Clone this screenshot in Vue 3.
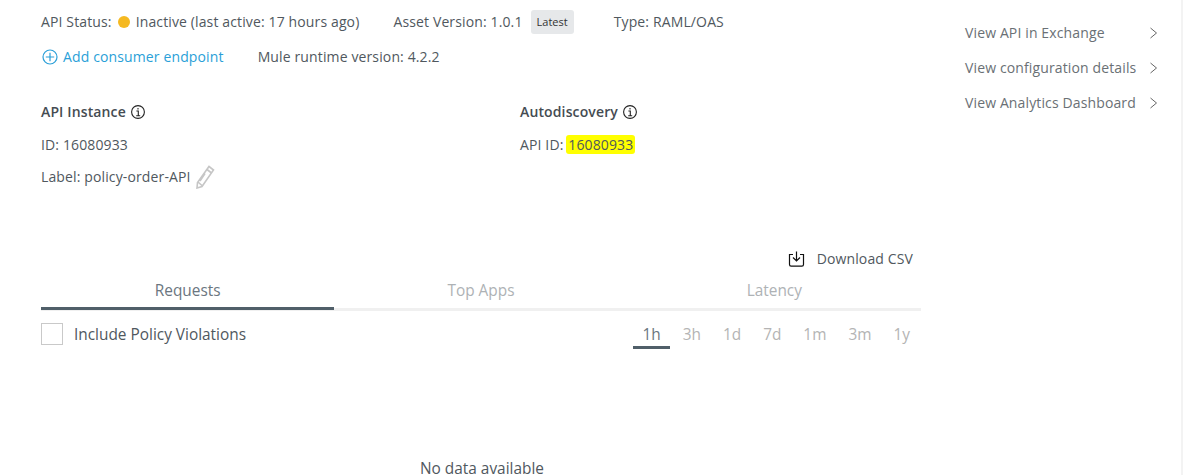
<template>
  <div class="page">
    <div class="main">
      <div class="row first">
        <span class="status">API Status:<i class="dot"></i>Inactive (last active: 17 hours ago)</span>
        <span class="asset">Asset Version: 1.0.1<b class="tag">Latest</b></span>
        <span class="type">Type: RAML/OAS</span>
      </div>
      <div class="row second">
        <a class="add">
          <svg width="16" height="16" viewBox="0 0 16 16" fill="none" stroke="#2a9fd8" stroke-width="1.2">
            <circle cx="8" cy="8" r="7" />
            <path d="M8 3.800v8.400M3.800 8h8.400" />
          </svg>
          Add consumer endpoint
        </a>
        <span>Mule runtime version: 4.2.2</span>
      </div>

      <div class="details">
        <div class="col">
          <h4>API Instance
            <svg class="info" width="14" height="14" viewBox="0 0 14 14" fill="none" stroke="#222" stroke-width="1.1">
              <circle cx="7" cy="7" r="6.400" />
              <path d="M5.400 6H7.300V10.800M5.200 10.800H9.200M7 3v1.400" />
            </svg>
          </h4>
          <p class="line">ID: 16080933</p>
          <p class="line label">Label: policy-order-API
            <svg width="20" height="24" viewBox="0 0 20 24" fill="none" stroke="#c6c6c6" stroke-width="1.6">
              <path d="M14 1.500l4.500 3.500L7 21.500l-5 1.500 .5-5.500zM12 4.500l4.500 3.500M3 17l4.500 4M10 8.500l-5 7.500" />
            </svg>
          </p>
        </div>
        <div class="col">
          <h4>Autodiscovery
            <svg class="info" width="14" height="14" viewBox="0 0 14 14" fill="none" stroke="#222" stroke-width="1.1">
              <circle cx="7" cy="7" r="6.400" />
              <path d="M5.400 6H7.300V10.800M5.200 10.800H9.200M7 3v1.400" />
            </svg>
          </h4>
          <p class="line">API ID: <mark>16080933</mark></p>
        </div>
      </div>

      <div class="download">
        <svg width="17" height="16" viewBox="0 0 17 16" fill="none" stroke="#111" stroke-width="1.2">
          <path d="M8.500 .5v9.500M5 6.500l3.500 3.500 3.500-3.500M5 3.500H1.500v10c0 1 .6 1.700 1.600 1.700h10.800c1 0 1.600-.7 1.600-1.700v-10H12" />
        </svg>
        Download CSV
      </div>

      <div class="tabs">
        <div v-for="(tab, index) in tabs" :key="tab" class="tab" :class="{ active: index === 0 }">{{ tab }}</div>
      </div>

      <div class="filters">
        <label class="check"><span class="box"></span>Include Policy Violations</label>
        <div class="ranges">
          <span v-for="(range, index) in ranges" :key="range" class="range" :class="{ active: index === 0 }">{{ range }}</span>
        </div>
      </div>

      <div class="empty">No data available</div>
    </div>

    <div class="side">
      <a v-for="link in links" :key="link" class="link">
        {{ link }}
        <svg width="9" height="12" viewBox="0 0 9 12" fill="none" stroke="#666" stroke-width="1">
          <path d="M1.500 1l6 5-6 5" />
        </svg>
      </a>
    </div>
    <div class="scrollbar"></div>
  </div>
</template>

<script setup>
const tabs = ['Requests', 'Top Apps', 'Latency']
const ranges = ['1h', '3h', '1d', '7d', '1m', '3m', '1y']
const links = ['View API in Exchange', 'View configuration details', 'View Analytics Dashboard']
</script>

<style>
html, body {
  margin: 0;
  overflow: hidden;
  background: #fff;
}
</style>

<style scoped>
.page {
  display: flex;
  height: 475px;
  overflow: hidden;
  font-family: "Open Sans", sans-serif;
  font-size: 14px;
  letter-spacing: 0.13px;
  line-height: 20px;
  color: #50585e;
}

.main {
  width: 880px;
  margin-left: 41px;
  flex-shrink: 0;
}

.row {
  display: flex;
  align-items: center;
}

.first {
  height: 24px;
  margin-top: 10px;
}

.status, .asset {
  display: flex;
  align-items: center;
}

.dot {
  width: 12px;
  height: 12px;
  margin: 0 6px 0 6px;
  border-radius: 50%;
  background: #f5b921;
}

.asset {
  margin-left: 34px;
}

.tag {
  margin-left: 8px;
  padding: 0 6px;
  border-radius: 3px;
  background: #e6e8ea;
  color: #333;
  font-size: 11px;
  font-weight: 400;
  letter-spacing: 0;
  line-height: 24px;
}

.type {
  margin-left: 40px;
}

.second {
  height: 24px;
  margin-top: 11px;
}

.add {
  display: flex;
  align-items: center;
  gap: 5px;
  margin: 0 34px 0 1px;
  color: #2a9fd8;
}

.details {
  display: flex;
  margin-top: 31px;
}

.col {
  flex: none;
  width: 479px;
}

h4 {
  display: flex;
  align-items: center;
  gap: 5px;
  margin: 0;
  font-size: 14px;
  font-weight: 600;
  line-height: 24px;
  color: #454c52;
}

.line {
  margin: 9px 0 0;
  line-height: 24px;
}

.label {
  display: flex;
  align-items: center;
  gap: 4px;
  margin-top: 8px;
}

mark {
  margin-left: -1px;
  padding: 0 2px;
  border-radius: 3px;
  background: #ffff00;
  color: #50585e;
}

.download {
  display: flex;
  align-items: center;
  justify-content: flex-end;
  gap: 12px;
  margin: 58px 8px 0 0;
  height: 24px;
}

.tabs {
  display: flex;
  margin-top: 9px;
  border-bottom: 3px solid #f0f0f0;
}

.tab {
  flex: 1;
  height: 30px;
  margin-bottom: -3px;
  padding-top: 1px;
  text-align: center;
  font-size: 15.4px;
  letter-spacing: 0;
  color: #aeb2b5;
}

.tab.active {
  box-sizing: border-box;
  height: 30px;
  border-bottom: 3px solid #505f69;
  color: #6b7680;
}

.filters {
  display: flex;
  justify-content: space-between;
  margin-top: 12px;
  font-size: 15.4px;
  letter-spacing: 0;
}

.check {
  display: flex;
  align-items: flex-start;
  align-self: flex-start;
  gap: 11px;
  line-height: 24px;
}

.box {
  box-sizing: border-box;
  width: 22px;
  height: 22px;
  border: 1px solid #c9c9c9;
}

.ranges {
  display: flex;
  gap: 3px;
  margin-right: 1.500px;
}

.range {
  box-sizing: border-box;
  height: 26px;
  padding: 2px 9.500px 0;
  text-align: center;
  color: #b4b4b4;
}

.range.active {
  border-bottom: 3px solid #505f69;
  color: #6b7680;
}

.empty {
  margin-top: 113px;
  padding-left: 379px;
  font-size: 15.4px;
  letter-spacing: 0;
  line-height: 14px;
  color: #50585e;
}

.side {
  display: flex;
  flex-direction: column;
  gap: 15px;
  margin: 23px 0 0 44px;
}

.link {
  display: flex;
  align-items: center;
  justify-content: space-between;
  width: 193px;
  color: #6a7075;
}

.scrollbar {
  flex: none;
  width: 2px;
  margin-left: auto;
  background: #f3f3f3;
}
</style>
